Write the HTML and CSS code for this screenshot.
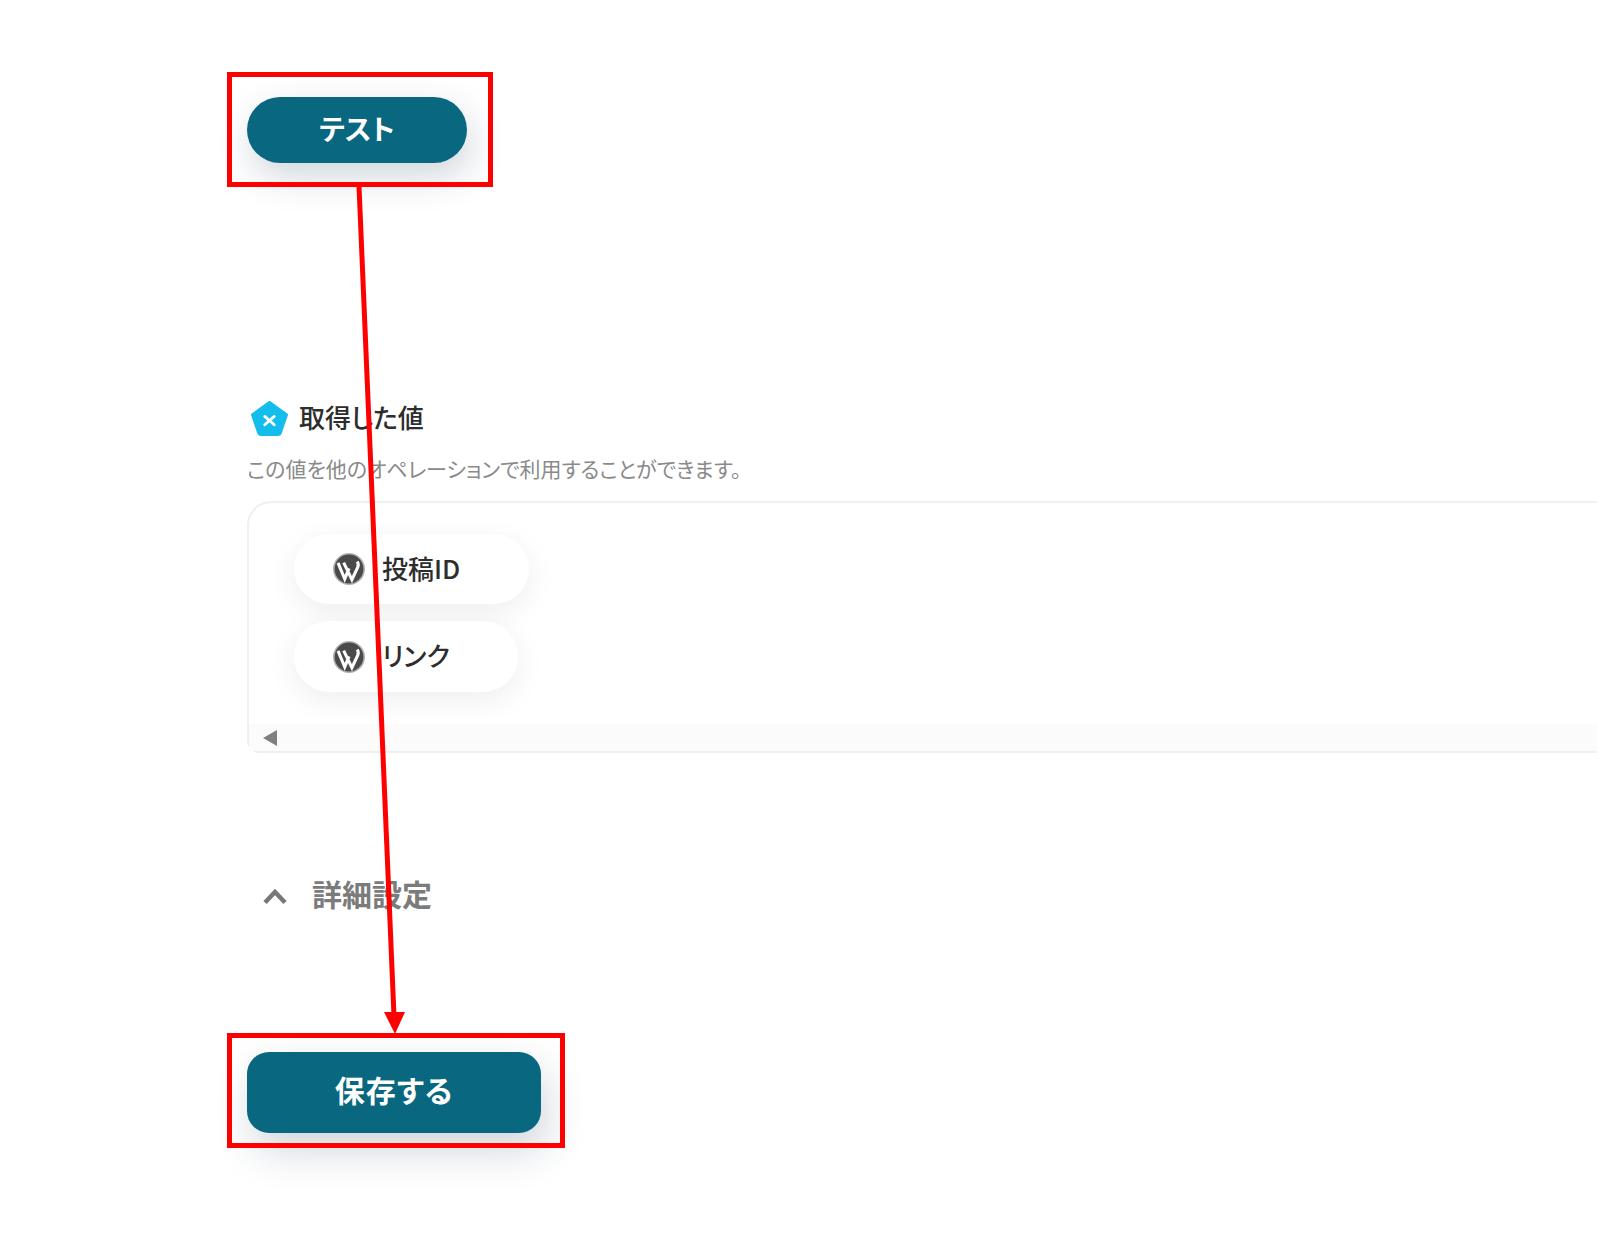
FILE: index.html
```html
<!DOCTYPE html>
<html lang="ja">
<head>
  <meta charset="UTF-8">
  <title>テスト</title>
  <link rel="stylesheet" href="styles.css">
</head>
<body>
  <div class="page">
    <button class="btn btn-test">テスト</button>

    <div class="result-head">
      <svg class="var-icon" viewBox="1.500 1.500 35 33">
        <path d="M19 3 L35 14.500 L29 32 Q28.500 33 27 33 L11 33 Q9.500 33 9 32 L3 14.500 Z" fill="#14bdec" stroke="#14bdec" stroke-width="3" stroke-linejoin="round"/>
        <path d="M14.500 16 L23.500 24 M23.500 16 L14.500 24" stroke="#fff" stroke-width="2.600" stroke-linecap="round"/>
      </svg>
      <h2 class="result-title">取得した値</h2>
    </div>
    <p class="result-note">この値を他のオペレーションで利用することができます。</p>

    <div class="panel">
      <div class="chips">
        <div class="chip chip-id">
          <svg class="wp-icon" viewBox="0 0 24 24"><use href="#wp"/></svg>
          <span class="chip-text">投稿ID</span>
        </div>
        <div class="chip chip-link">
          <svg class="wp-icon" viewBox="0 0 24 24"><use href="#wp"/></svg>
          <span class="chip-text">リンク</span>
        </div>
      </div>
      <div class="scrollbar">
        <span class="scroll-arrow"></span>
      </div>
    </div>

    <div class="advanced">
      <svg class="chevron" viewBox="0 0 26 17">
        <path d="M3 14.500 L13 4 L23 14.500" fill="none" stroke="#777" stroke-width="4.500"/>
      </svg>
      <span class="advanced-label">詳細設定</span>
    </div>

    <button class="btn btn-save">保存する</button>
  </div>

  <!-- annotations on top of the screenshot -->
  <div class="mark mark-test"></div>
  <div class="mark mark-save"></div>
  <svg class="arrow" viewBox="0 0 1600 1249">
    <line x1="359" y1="186" x2="394" y2="1016" stroke="#ff0000" stroke-width="5"/>
    <polygon points="384,1012 405,1012 395,1034" fill="#ff0000"/>
  </svg>

  <svg class="defs" width="0" height="0">
    <symbol id="wp" viewBox="0 0 24 24">
      <circle cx="12" cy="12" r="12" fill="#b0b0b0"/>
      <circle cx="12" cy="12" r="10.800" fill="#4a4a4a"/>
      <path d="M3.800 7.400 L8.800 19.500 L12 11.500 M8 7.200 L14.200 20 L18.600 10.600 Q19.500 8.400 18.200 6.400" fill="none" stroke="#fff" stroke-width="2.300"/>
    </symbol>
  </svg>
</body>
</html>
```

FILE: styles.css
```css
html, body {
  margin: 0;
  padding: 0;
  height: 1249px;
  overflow: hidden;
  background: #fff;
  font-family: "Noto Sans CJK JP", "Noto Sans", sans-serif;
  font-feature-settings: "palt";
}

.page {
  padding: 97px 3px 0 247px;
}

.btn {
  display: block;
  border: none;
  color: #fff;
  background: #0a6780;
  font-family: inherit;
  font-feature-settings: inherit;
  font-weight: 700;
}

.btn-test {
  width: 220px;
  height: 66px;
  padding: 0 0 4px;
  border-radius: 33px;
  font-size: 28px;
  box-shadow: 4px 14px 36px rgba(30, 55, 80, 0.2);
}

.btn-save {
  width: 294px;
  height: 81px;
  margin-top: 136px;
  padding: 0 0 7px;
  border-radius: 22px;
  font-size: 30px;
  letter-spacing: 1px;
  box-shadow: 6px 18px 40px rgba(30, 55, 80, 0.2);
}

/* result block */
.result-head {
  display: flex;
  align-items: center;
  gap: 11px;
  margin: 235px 0 0 4px;
  height: 38px;
}

.var-icon {
  width: 37px;
  height: 35px;
  margin-top: 3px;
}

.result-title {
  margin: 0;
  color: #2d2d2d;
  font-size: 26px;
  line-height: 38px;
  font-weight: 500;
}

.result-note {
  margin: 18px 0 0;
  color: #8a8a8a;
  font-size: 21px;
  line-height: 28px;
}

.panel {
  margin-top: 19px;
  height: 252px;
  box-sizing: border-box;
  border: 2px solid #f0f0f0;
  border-right: none;
  border-radius: 24px 0 0 12px;
  display: flex;
  flex-direction: column;
  justify-content: space-between;
}

.chips {
  display: flex;
  flex-direction: column;
  align-items: flex-start;
  gap: 17px;
  padding: 31px 0 0 45px;
}

.chip {
  display: flex;
  align-items: center;
  gap: 17px;
  height: 70px;
  padding-left: 39px;
  box-sizing: border-box;
  border-radius: 35px;
  background: #fff;
  color: #2d2d2d;
  font-size: 26px;
  font-weight: 500;
  box-shadow: 0 8px 30px rgba(0, 0, 0, 0.07);
}

.chip-id { width: 235px; }
.chip-link { width: 224px; height: 71px; }

.chip-text {
  padding-bottom: 4px;
}

.wp-icon {
  width: 32px;
  height: 32px;
}

.scrollbar {
  height: 27px;
  background: #fbfbfb;
  display: flex;
  align-items: center;
  padding-left: 14px;
}

.scroll-arrow {
  width: 0;
  height: 0;
  border-style: solid;
  border-width: 8px 14px 8px 0;
  border-color: transparent #808080 transparent transparent;
}

.advanced {
  display: flex;
  align-items: center;
  margin: 119px 0 0 15px;
  height: 44px;
}

.chevron {
  width: 26px;
  height: 17px;
  margin-top: 4px;
}

.advanced-label {
  margin-left: 24px;
  padding-bottom: 2px;
  color: #7b7b7b;
  font-size: 30px;
  font-weight: 700;
  line-height: 44px;
}

/* red annotation boxes and arrow */
.mark {
  position: absolute;
  box-sizing: border-box;
  border: 5px solid #ff0000;
}

.mark-test {
  left: 227px;
  top: 72px;
  width: 266px;
  height: 115px;
}

.mark-save {
  left: 227px;
  top: 1033px;
  width: 338px;
  height: 115px;
}

.arrow {
  position: absolute;
  left: 0;
  top: 0;
  width: 1600px;
  height: 1249px;
}

.defs {
  position: absolute;
}
```
